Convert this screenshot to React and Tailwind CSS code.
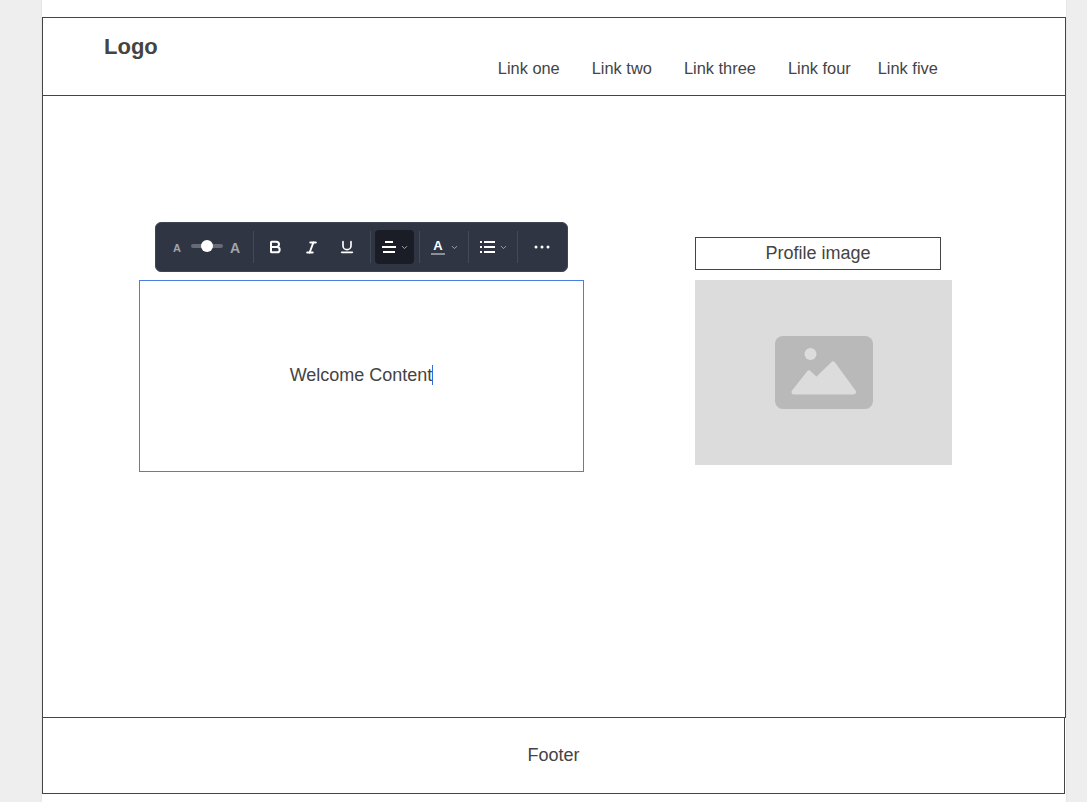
import React from 'react';
import { Bold, Italic, Underline, ChevronDown } from 'lucide-react';

const links = [
  { label: 'Link one', cls: 'ml-0' },
  { label: 'Link two', cls: 'ml-8' },
  { label: 'Link three', cls: 'ml-8' },
  { label: 'Link four', cls: 'ml-8' },
  { label: 'Link five', cls: 'ml-[27px]' },
];

const Divider = () => <div className="w-px h-8 bg-[#434955]" />;

const Chevron = () => <ChevronDown size={9} strokeWidth={2.6} className="text-[#a4a8b0]" />;

const Toolbar = () => (
  <div className="flex items-center w-[413px] h-[50px] ml-4 mb-2 rounded-md bg-[#2f3543] border border-[#3f4553] text-white">
    <div className="flex items-center w-[97px] pl-[17px]">
      <span className="text-[11px] font-bold text-[#a2a5ad] w-[10px] leading-none pt-[3px]">A</span>
      <div className="relative w-8 h-1 ml-[8px] -mt-[2px] rounded-full bg-[#666b76]">
        <div className="absolute left-[10px] top-[-4px] w-3 h-3 rounded-full bg-white" />
      </div>
      <span className="text-[14px] font-bold text-[#a2a5ad] ml-[7px] leading-none pt-px">A</span>
    </div>
    <Divider />
    <div className="flex items-center w-[116px]">
      <div className="w-[43px] flex justify-center pr-[1px]"><Bold size={16} strokeWidth={3} /></div>
      <div className="w-[36px] flex justify-center pr-[7px]"><Italic size={15} strokeWidth={3} /></div>
      <div className="w-[36px] flex justify-center pr-[8px]"><Underline size={16} strokeWidth={2.5} /></div>
    </div>
    <Divider />
    <div className="flex items-center justify-center gap-[4px] w-[39px] h-[34px] ml-1 mr-[5px] rounded bg-[#1a1d25] pl-[2px]">
      <svg width="14" height="12" viewBox="0 0 14 12" fill="none" stroke="white" strokeWidth="2">
        <path d="M3 1h8M0 6h14M1 11h12" />
      </svg>
      <Chevron />
    </div>
    <Divider />
    <div className="flex items-center justify-center gap-[5px] w-[48px] pl-[2px]">
      <div className="flex flex-col items-center w-[14px]">
        <span className="text-[13px] font-bold leading-[12px]">A</span>
        <div className="w-[14px] h-[2px] mt-[1px] bg-[#8b8f98]" />
      </div>
      <Chevron />
    </div>
    <Divider />
    <div className="flex items-center justify-center gap-[4px] w-[48px] pl-[2px]">
      <svg width="15" height="12" viewBox="0 0 15 12" fill="none" stroke="white" strokeWidth="2">
        <path d="M0 1h2M4 1h11M0 6h2M4 6h11M0 11h2M4 11h11" />
      </svg>
      <Chevron />
    </div>
    <Divider />
    <div className="flex items-center justify-center flex-1 pr-[1px]">
      <svg width="16" height="4" viewBox="0 0 16 4" fill="white">
        <circle cx="2" cy="2" r="1.5" />
        <circle cx="8" cy="2" r="1.5" />
        <circle cx="14" cy="2" r="1.5" />
      </svg>
    </div>
  </div>
);

const ImagePlaceholder = () => (
  <div className="flex items-center justify-center w-[257px] h-[185px] bg-[#dcdcdc] pl-[1px] pb-[1px]">
    <svg width="98" height="73" viewBox="0 0 98 73">
      <rect width="98" height="73" rx="8" fill="#b9b9b9" />
      <circle cx="35.5" cy="18" r="6" fill="#dcdcdc" />
      <path
        d="M19 56 L34 37 L41.5 44 L58 28 L78.5 56 Z"
        fill="#dcdcdc"
        stroke="#dcdcdc"
        strokeWidth="5"
        strokeLinejoin="round"
      />
    </svg>
  </div>
);

const App = () => (
  <div
    className="h-[802px] overflow-hidden bg-[#eeeeee] text-[#444444]"
    style={{ fontFamily: '"Liberation Sans", Arial, sans-serif' }}
  >
    <div className="w-[1024px] h-[802px] ml-[42px] pt-[17px] bg-white shadow-[0_0_2px_#d8d8d8]">
      <div className="h-[701px] border border-[#444444]">
        <header className="flex h-[78px] border-b border-[#444444]">
          <div className="ml-[61px] mt-[14px] text-[22px] leading-[29px] font-bold">Logo</div>
          <nav className="flex ml-[340px] mt-[40px] text-[16.4px] leading-[20px]">
            {links.map((link) => (
              <a key={link.label} className={link.cls}>{link.label}</a>
            ))}
          </nav>
        </header>
        <main className="flex pt-[126px]">
          <div className="ml-24 w-[445px]">
            <Toolbar />
            <div className="flex items-center justify-center w-[445px] h-[192px] pb-[3px] border border-[#4a7ee0] text-[18px]">
              <span className="border-r border-[#2f6fe0] leading-[20px]">Welcome Content</span>
            </div>
          </div>
          <div className="ml-[111px] pt-[15px]">
            <div className="flex items-center justify-center w-[246px] h-[33px] mb-[10px] border border-[#444444] text-[18px]">
              Profile image
            </div>
            <ImagePlaceholder />
          </div>
        </main>
      </div>
      <footer className="flex items-center justify-center w-[1023px] h-[76px] border border-t-0 border-[#444444] text-[18px]">
        Footer
      </footer>
    </div>
  </div>
);

export default App;
